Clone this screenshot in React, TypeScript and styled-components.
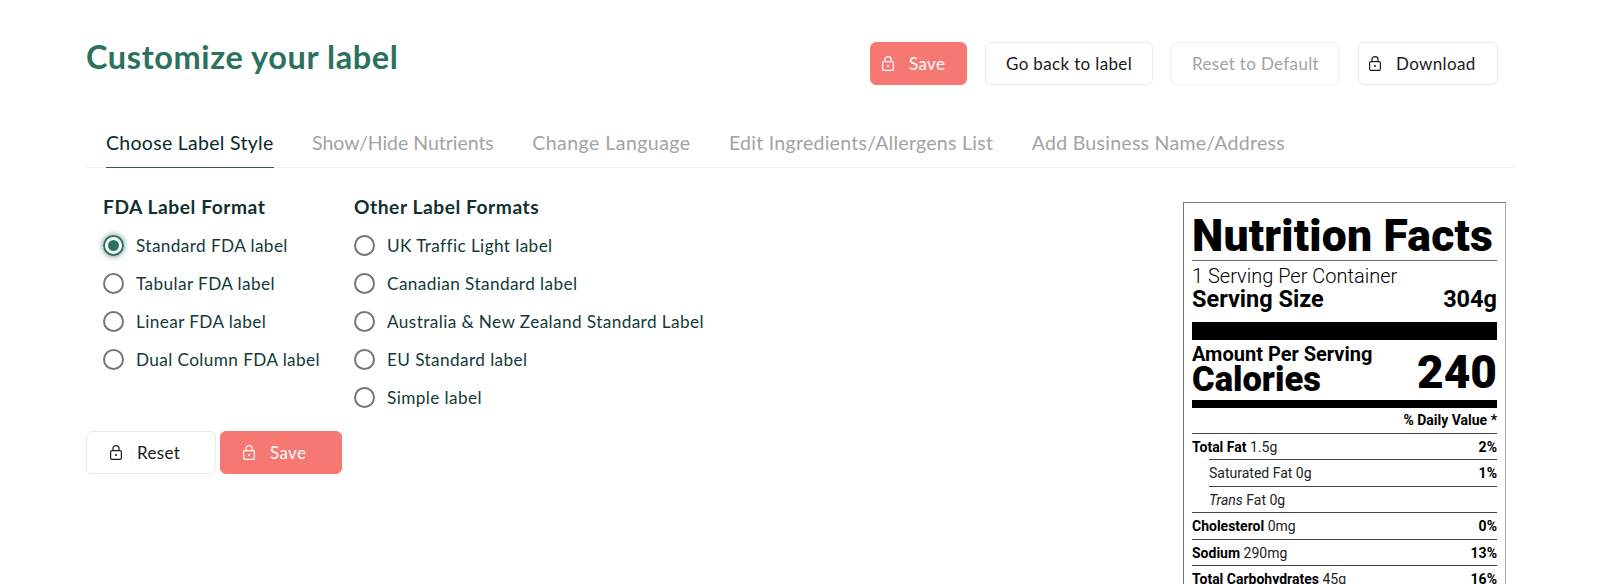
import React from "react";
import styled, { createGlobalStyle } from "styled-components";

const Global = createGlobalStyle`
  html, body { margin: 0; padding: 0; background: #fff; }
  body { height: 584px; overflow: hidden; font-family: "Lato", "Noto Sans", sans-serif; }
`;

const Page = styled.div`
  width: 1600px;
  height: 584px;
  overflow: hidden;
  box-sizing: border-box;
  padding: 42px 85px 0 86px;
`;

const Header = styled.header`
  display: flex;
  justify-content: space-between;
  align-items: flex-start;
  padding-right: 17px;
  height: 84px;
`;

const Title = styled.h1`
  margin: 0;
  font-size: 32.5px;
  line-height: 30px;
  font-weight: 700;
  color: #2c7160;
  letter-spacing: 0.6px;
`;

const Actions = styled.div`
  display: flex;
  gap: 18px;
`;

const Button = styled.button<{ $variant?: "primary" | "plain" | "muted"; $w: number; $pad?: number }>`
  display: flex;
  align-items: center;
  justify-content: ${(p) => (p.$pad === undefined ? "center" : "flex-start")};
  gap: 15px;
  box-sizing: border-box;
  flex: none;
  width: ${(p) => p.$w}px;
  height: 43px;
  border-radius: 6px;
  font-family: inherit;
  font-size: 17px;
  font-weight: 400;
  letter-spacing: 0.35px;
  padding: 0 0 0 ${(p) => p.$pad ?? 0}px;
  background: ${(p) => (p.$variant === "primary" ? "#f67873" : "#fff")};
  border: 1px solid ${(p) => (p.$variant === "primary" ? "#f67873" : p.$variant === "muted" ? "#f0f1f1" : "#e8eaea")};
  color: ${(p) => (p.$variant === "primary" ? "#fff" : p.$variant === "muted" ? "#a3a3a3" : "#1a1a1a")};
`;

const Tabs = styled.nav`
  display: flex;
  gap: 38.5px;
  height: 41px;
  padding-left: 20px;
  border-bottom: 1px solid #f0f1f1;
`;

const Tab = styled.div<{ $active?: boolean; $track: number }>`
  height: 41px;
  line-height: 33px;
  font-size: 19.5px;
  letter-spacing: ${(p) => p.$track}px;
  white-space: nowrap;
  color: ${(p) => (p.$active ? "#0a2a2a" : "#a3a3a3")};
  border-bottom: ${(p) => (p.$active ? "1px solid #2f5c55" : "none")};
`;

const Body = styled.div`
  display: flex;
  justify-content: space-between;
  padding-right: 9px;
`;

const Left = styled.div`
  display: flex;
  flex-direction: column;
`;

const Formats = styled.div`
  display: flex;
  gap: 34px;
  padding: 27px 0 0 17px;
  height: 263px;
  box-sizing: border-box;
`;

const Column = styled.section`
  display: flex;
  flex-direction: column;
`;

const Heading = styled.h2`
  margin: 0 0 7.5px;
  font-size: 19.2px;
  line-height: 24px;
  font-weight: 700;
  letter-spacing: 0.55px;
  color: #123030;
`;

const Option = styled.label`
  display: flex;
  align-items: center;
  flex: none;
  gap: 12px;
  height: 38px;
  font-size: 17.2px;
  letter-spacing: 0.4px;
  white-space: nowrap;
  color: #123a3a;
`;

const Radio = styled.span<{ $checked?: boolean }>`
  display: flex;
  align-items: center;
  justify-content: center;
  box-sizing: border-box;
  width: 21px;
  height: 21px;
  border-radius: 50%;
  border: 2px solid ${(p) => (p.$checked ? "#2c7160" : "#767676")};
  box-shadow: ${(p) => (p.$checked ? "0 0 5px 1px rgba(44,113,96,.55)" : "none")};
  &::after {
    content: "";
    display: ${(p) => (p.$checked ? "block" : "none")};
    width: 11px;
    height: 11px;
    border-radius: 50%;
    background: #2c7160;
  }
`;

const FormActions = styled.div`
  display: flex;
  gap: 4px;
`;

const Label = styled.article`
  box-sizing: border-box;
  width: 323px;
  height: 400px;
  margin-top: 34px;
  padding: 10px 8px;
  border: 1px solid #777;
  border-right-color: #aaa;
  border-bottom: none;
  font-family: "Roboto", "Liberation Sans", sans-serif;
  color: #000;
`;

const LabelTitle = styled.div`
  font-size: 44.5px;
  line-height: 47px;
  font-weight: 900;
  letter-spacing: 0.2px;
  white-space: nowrap;
  border-bottom: 1px solid #666;
`;

const ServingCount = styled.div`
  font-size: 20px;
  line-height: 20px;
  font-weight: 300;
  margin-top: 5px;
`;

const ServingSize = styled.div`
  display: flex;
  justify-content: space-between;
  font-size: 23.5px;
  line-height: 26px;
  font-weight: 700;
`;

const ThickBar = styled.div<{ $h: number; $mt: number }>`
  height: ${(p) => p.$h}px;
  margin-top: ${(p) => p.$mt}px;
  background: #000;
`;

const CaloriesRow = styled.div`
  display: flex;
  justify-content: space-between;
  align-items: flex-start;
  height: 60px;
`;

const CaloriesLeft = styled.div`
  display: flex;
  flex-direction: column;
  padding-top: 5px;
  font-weight: 900;
`;

const AmountText = styled.span`
  font-size: 20px;
  line-height: 18px;
  font-weight: 700;
`;

const CaloriesText = styled.span`
  font-size: 34.5px;
  line-height: 32px;
`;

const CaloriesValue = styled.span`
  font-size: 46px;
  line-height: 50px;
  margin-top: 7px;
  font-weight: 900;
`;

const DailyValue = styled.div`
  height: 25px;
  line-height: 25px;
  text-align: right;
  font-size: 14px;
  font-weight: 700;
`;

const Row = styled.div<{ $indent?: boolean }>`
  display: flex;
  justify-content: space-between;
  box-sizing: border-box;
  height: 26.4px;
  line-height: 26px;
  font-size: 14px;
  margin-left: ${(p) => (p.$indent ? "17px" : "0")};
  border-top: 1px solid #444;
`;

const RowName = styled.span`
  font-weight: 400;
  color: #222;
  b { font-weight: 700; color: #000; }
`;

const RowValue = styled.b`
  font-weight: 700;
`;

const Lock = () => (
  <svg width={12} height={15} viewBox="0 0 12 15" fill="none" stroke="currentColor" strokeWidth="1.2">
    <rect x="0.6" y="5.6" width="10.8" height="8.8" rx="1.4" />
    <path d="M3 5.6V3.2a3 2.6 0 0 1 6 0v2.4" />
    <circle cx="6" cy="10" r="1" fill="currentColor" stroke="none" />
  </svg>
);

const fda = ["Standard FDA label", "Tabular FDA label", "Linear FDA label", "Dual Column FDA label"];
const other = [
  "UK Traffic Light label",
  "Canadian Standard label",
  "Australia & New Zealand Standard Label",
  "EU Standard label",
  "Simple label",
];
const tabs: { text: string; track: number }[] = [
  { text: "Choose Label Style", track: 0.29 },
  { text: "Show/Hide Nutrients", track: -0.03 },
  { text: "Change Language", track: 0.46 },
  { text: "Edit Ingredients/Allergens List", track: 0.27 },
  { text: "Add Business Name/Address", track: 0.28 },
];

export default function App() {
  return (
    <Page>
      <Global />
      <Header>
        <Title>Customize your label</Title>
        <Actions>
          <Button $variant="primary" $w={97} $pad={11}>
            <Lock />
            Save
          </Button>
          <Button $w={168}>Go back to label</Button>
          <Button $variant="muted" $w={169}>Reset to Default</Button>
          <Button $w={140} $pad={10}>
            <Lock />
            Download
          </Button>
        </Actions>
      </Header>
      <Tabs>
        {tabs.map((t, i) => (
          <Tab key={t.text} $active={i === 0} $track={t.track}>{t.text}</Tab>
        ))}
      </Tabs>
      <Body>
        <Left>
          <Formats>
            <Column>
              <Heading>FDA Label Format</Heading>
              {fda.map((o, i) => (
                <Option key={o}>
                  <Radio $checked={i === 0} />
                  {o}
                </Option>
              ))}
            </Column>
            <Column>
              <Heading>Other Label Formats</Heading>
              {other.map((o) => (
                <Option key={o}>
                  <Radio />
                  {o}
                </Option>
              ))}
            </Column>
          </Formats>
          <FormActions>
            <Button $w={130} $pad={23}>
              <Lock />
              Reset
            </Button>
            <Button $variant="primary" $w={122} $pad={22}>
              <Lock />
              Save
            </Button>
          </FormActions>
        </Left>
        <Label>
          <LabelTitle>Nutrition Facts</LabelTitle>
          <ServingCount>1 Serving Per Container</ServingCount>
          <ServingSize>
            <span>Serving Size</span>
            <span>304g</span>
          </ServingSize>
          <ThickBar $h={18} $mt={10} />
          <CaloriesRow>
            <CaloriesLeft>
              <AmountText>Amount Per Serving</AmountText>
              <CaloriesText>Calories</CaloriesText>
            </CaloriesLeft>
            <CaloriesValue>240</CaloriesValue>
          </CaloriesRow>
          <ThickBar $h={8} $mt={0} />
          <DailyValue>% Daily Value *</DailyValue>
          <Row>
            <RowName><b>Total Fat</b> 1.5g</RowName>
            <RowValue>2%</RowValue>
          </Row>
          <Row $indent>
            <RowName>Saturated Fat 0g</RowName>
            <RowValue>1%</RowValue>
          </Row>
          <Row $indent>
            <RowName><i>Trans</i> Fat 0g</RowName>
          </Row>
          <Row>
            <RowName><b>Cholesterol</b> 0mg</RowName>
            <RowValue>0%</RowValue>
          </Row>
          <Row>
            <RowName><b>Sodium</b> 290mg</RowName>
            <RowValue>13%</RowValue>
          </Row>
          <Row>
            <RowName><b>Total Carbohydrates</b> 45g</RowName>
            <RowValue>16%</RowValue>
          </Row>
        </Label>
      </Body>
    </Page>
  );
}
